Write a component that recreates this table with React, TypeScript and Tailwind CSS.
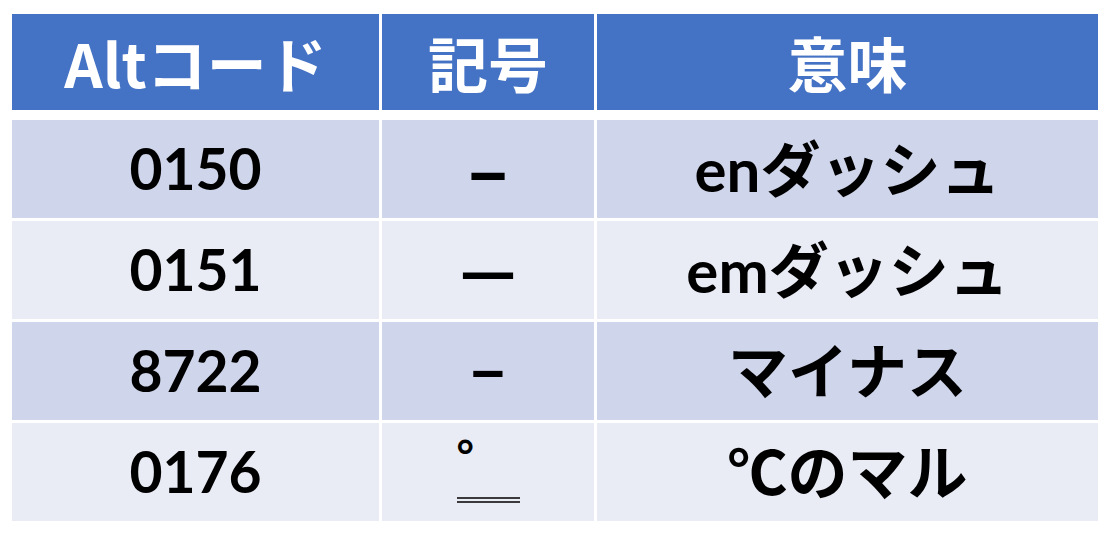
import React from 'react';

type Row = {
    code: string;
    symbol: React.ReactNode;
    meaning: string;
};

const rows: Row[] = [
    { code: '0150', symbol: <span className="text-[82px] leading-none">–</span>, meaning: 'enダッシュ' },
    { code: '0151', symbol: <span className="text-[74px] leading-none">—</span>, meaning: 'emダッシュ' },
    { code: '8722', symbol: <span className="text-[66px] leading-none">−</span>, meaning: 'マイナス' },
    {
        code: '0176',
        symbol: (
            <div className="flex h-[62px] w-[63px] flex-col justify-between">
                <span className="block text-left text-[42px] leading-[28px]">°</span>
                <div className="border-b-[6px] border-double border-[#3a3a3a]"></div>
            </div>
        ),
        meaning: '℃のマル',
    },
];

const bodyFont = "font-['Lato','Noto_Sans_CJK_JP',sans-serif]";

const App: React.FC = () => {
    return (
        <div className="h-[539px] w-[1110px] bg-white pl-[12px] pt-[14px]">
            <div className="flex w-[1086px] flex-col">
                {/* Header */}
                <div className="grid h-[96px] grid-cols-[367px_212px_501px] gap-[3px] font-['Noto_Sans_CJK_JP',sans-serif] text-[60px] font-bold text-white">
                    <div className="flex items-center justify-center bg-[#4472c4]">Altコード</div>
                    <div className="flex items-center justify-center bg-[#4472c4]">記号</div>
                    <div className="flex items-center justify-center bg-[#4472c4]">意味</div>
                </div>

                {/* Body */}
                <div className="mt-[10px] flex flex-col gap-[3px]">
                    {rows.map((row, i) => {
                        const bg = i % 2 === 0 ? 'bg-[#cfd5ea]' : 'bg-[#e9ebf5]';
                        return (
                            <div
                                key={row.code}
                                className={`grid h-[98px] grid-cols-[367px_212px_501px] gap-[3px] ${bodyFont} font-bold text-black`}
                            >
                                <div className={`flex items-center justify-center ${bg} text-[57px]`}>{row.code}</div>
                                <div className={`flex items-center justify-center ${bg} text-[57px]`}>{row.symbol}</div>
                                <div className={`flex items-center justify-center ${bg} text-[60px]`}>{row.meaning}</div>
                            </div>
                        );
                    })}
                </div>
            </div>
        </div>
    );
};

export default App;
